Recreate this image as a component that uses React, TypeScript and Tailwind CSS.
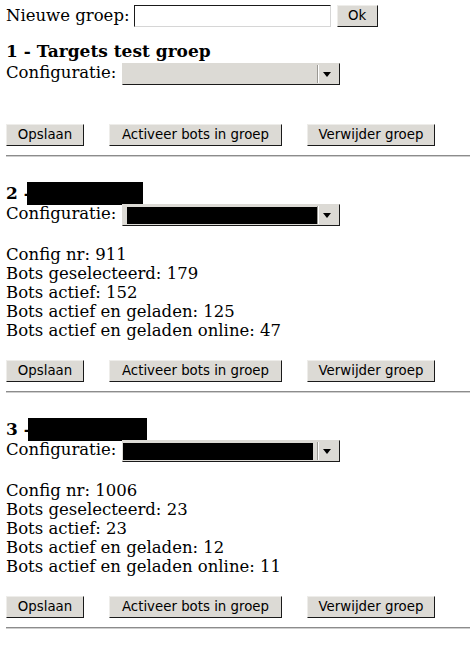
import { ReactNode } from 'react';

const serif = "font-['DejaVu_Serif',serif]";
const sans = "font-['DejaVu_Sans',sans-serif]";

function GtkButton({ width, children }: { width: string; children: ReactNode }) {
  return (
    <div
      className={`${width} ${sans} h-[22px] flex items-center justify-center bg-[#dcdad5] border-t border-l border-[#eeedea] border-b border-r border-b-[#1a1a1a] border-r-[#1a1a1a] text-[13.33px] leading-none text-black`}
    >
      {children}
    </div>
  );
}

function ConfigSelect({ redacted, redactFrom }: { redacted?: boolean; redactFrom?: string }) {
  return (
    <div className="w-[218px] h-[22px] flex items-center bg-[#dcdad5] border-t border-l border-[#dcdad5] border-b border-r border-b-[#1a1a1a] border-r-[#1a1a1a]">
      <div className="flex-1 h-full flex items-center">
        {redacted && <div className={`${redactFrom} h-[17px] w-[190px] bg-black`} />}
      </div>
      <div className="flex h-[18px] mr-[4px]">
        <div className="w-px bg-[#9a9893]" />
        <div className="w-px bg-white" />
      </div>
      <svg width="8" height="5" viewBox="0 0 8 5" className="mr-[8px]">
        <polygon points="0,0 8,0 4,5" fill="#000" />
      </svg>
    </div>
  );
}

function ConfigRow({ redacted, redactFrom }: { redacted?: boolean; redactFrom?: string }) {
  return (
    <div className="flex items-center gap-[6px] h-[22px]">
      <span className="leading-[19px] -mt-[4px]">Configuratie:</span>
      <ConfigSelect redacted={redacted} redactFrom={redactFrom} />
    </div>
  );
}

function ButtonRow() {
  return (
    <div className="flex gap-[25px]">
      <GtkButton width="w-[78px]">Opslaan</GtkButton>
      <GtkButton width="w-[173px]">Activeer bots in groep</GtkButton>
      <GtkButton width="w-[128px]">Verwijder groep</GtkButton>
    </div>
  );
}

function Rule() {
  return (
    <div className="mt-[9px] flex flex-col">
      <div className="h-px bg-[#8c8c8c]" />
      <div className="h-px bg-[#cfcfcf]" />
    </div>
  );
}

type Stats = { nr: number; selected: number; active: number; loaded: number; online: number };

function Group({ num, stats, boxWidth, boxMl, redactFrom }: { num: number; stats: Stats; boxWidth: string; boxMl: string; redactFrom: string }) {
  return (
    <section className="mt-[27px]">
      <h3 className="font-bold text-[17px] leading-[19px] flex items-center h-[19px]">
        <span>{num} -</span>
        <span className={`inline-block ${boxWidth} ${boxMl} h-[23px] bg-black`} />
      </h3>
      <div className="mt-[1px]">
        <ConfigRow redacted redactFrom={redactFrom} />
      </div>
      <div className="mt-[19px] leading-[19px]">
        <div>Config nr: {stats.nr}</div>
        <div>Bots geselecteerd: {stats.selected}</div>
        <div>Bots actief: {stats.active}</div>
        <div>Bots actief en geladen: {stats.loaded}</div>
        <div>Bots actief en geladen online: {stats.online}</div>
      </div>
      <div className="mt-[20px]">
        <ButtonRow />
      </div>
      <Rule />
    </section>
  );
}

export default function App() {
  return (
    <div className={`${serif} text-[16.5px] text-black bg-white min-h-screen pl-[6px] pt-[4px]`}>
      <div className="flex items-center h-[23px]">
        <span className="leading-[19px]">Nieuwe groep:</span>
        <div className="ml-[4px] w-[197px] h-[22px] bg-white border-t border-l border-[#1a1a1a] border-b border-r border-b-[#d6d6d6] border-r-[#d6d6d6]" />
        <div className="ml-[6px]">
          <GtkButton width="w-[41px]">Ok</GtkButton>
        </div>
      </div>

      <section className="mt-[15px]">
        <h3 className="font-bold text-[17px] leading-[19px]">1 - Targets test groep</h3>
        <div className="mt-[2px]">
          <ConfigRow />
        </div>
        <div className="mt-[39px]">
          <ButtonRow />
        </div>
        <Rule />
      </section>

      <Group
        num={2}
        stats={{ nr: 911, selected: 179, active: 152, loaded: 125, online: 47 }}
        boxWidth="w-[116px]"
        boxMl="-ml-[4px]"
        redactFrom="ml-[4px]"
      />
      <Group
        num={3}
        stats={{ nr: 1006, selected: 23, active: 23, loaded: 12, online: 11 }}
        boxWidth="w-[119px]"
        boxMl="-ml-[3px]"
        redactFrom="ml-0"
      />
    </div>
  );
}
